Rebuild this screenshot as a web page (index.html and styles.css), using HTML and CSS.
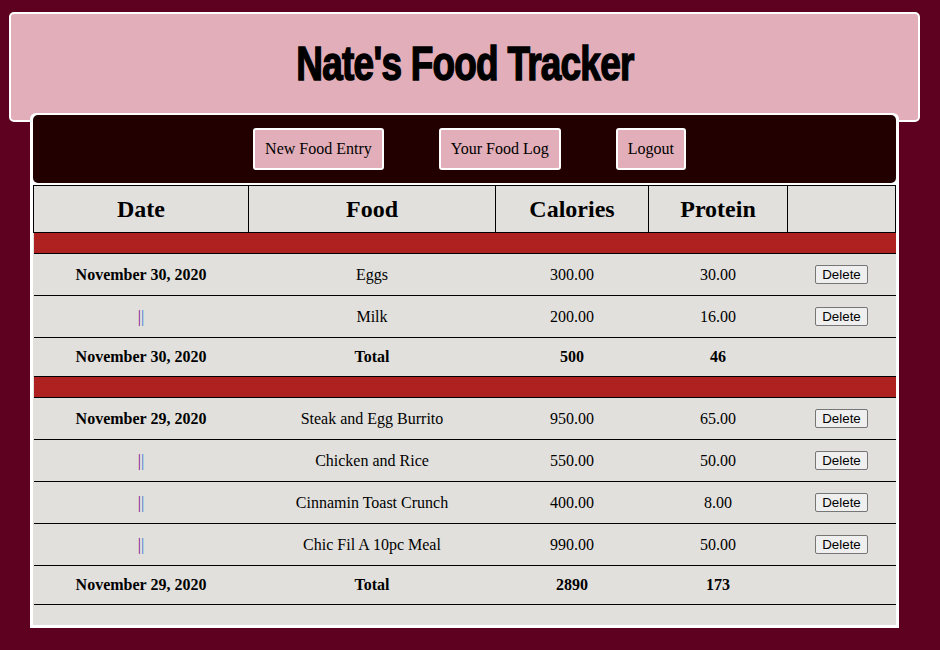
FILE: index.html
```html
<!DOCTYPE html>
<html>
<head>
<meta charset="utf-8">
<link rel="stylesheet" href="styles.css">
</head>
<body>
<header class="header">
  <h1 class="title"><span class="title-text">Nate's Food Tracker</span></h1>
</header>
<main class="panel">
  <nav class="nav">
    <a class="nav-btn" href="#">New Food Entry</a>
    <a class="nav-btn" href="#">Your Food Log</a>
    <a class="nav-btn" href="#">Logout</a>
  </nav>
  <table class="log">
    <colgroup>
      <col class="c1"><col class="c2"><col class="c3"><col class="c4"><col class="c5">
    </colgroup>
    <thead>
      <tr><th>Date</th><th>Food</th><th>Calories</th><th>Protein</th><th></th></tr>
    </thead>
    <tbody>
      <tr class="sep"><td colspan="5"></td></tr>
      <tr class="row"><td class="b">November 30, 2020</td><td>Eggs</td><td>300.00</td><td>30.00</td><td><button class="del">Delete</button></td></tr>
      <tr class="row"><td><span class="p">|</span><span class="bl">|</span></td><td>Milk</td><td>200.00</td><td>16.00</td><td><button class="del">Delete</button></td></tr>
      <tr class="total"><td>November 30, 2020</td><td>Total</td><td>500</td><td>46</td><td></td></tr>
      <tr class="sep"><td colspan="5"></td></tr>
      <tr class="row"><td class="b">November 29, 2020</td><td>Steak and Egg Burrito</td><td>950.00</td><td>65.00</td><td><button class="del">Delete</button></td></tr>
      <tr class="row"><td><span class="p">|</span><span class="bl">|</span></td><td>Chicken and Rice</td><td>550.00</td><td>50.00</td><td><button class="del">Delete</button></td></tr>
      <tr class="row"><td><span class="p">|</span><span class="bl">|</span></td><td>Cinnamin Toast Crunch</td><td>400.00</td><td>8.00</td><td><button class="del">Delete</button></td></tr>
      <tr class="row"><td><span class="p">|</span><span class="bl">|</span></td><td>Chic Fil A 10pc Meal</td><td>990.00</td><td>50.00</td><td><button class="del">Delete</button></td></tr>
      <tr class="total"><td>November 29, 2020</td><td>Total</td><td>2890</td><td>173</td><td></td></tr>
      <tr class="end"><td colspan="5"></td></tr>
    </tbody>
  </table>
</main>
</body>
</html>
```
FILE: styles.css
```css
html, body {
  margin: 0;
  padding: 0;
}
body {
  background: #5e0020;
  font-family: "Liberation Serif", "Times New Roman", serif;
  color: #000;
  padding-top: 12px;
  height: 638px;
  overflow: hidden;
}
.header {
  box-sizing: border-box;
  margin-left: 9px;
  width: 911px;
  height: 110px;
  background: #e2aeb9;
  border: 2px solid #fff;
  border-radius: 5px;
  display: flex;
  justify-content: center;
  align-items: center;
}
.title {
  margin: 0;
  padding-bottom: 6px;
  font-family: "Liberation Sans", Arial, sans-serif;
  font-weight: 700;
  font-size: 48px;
  line-height: 1;
  letter-spacing: -1px;
}
.title-text {
  display: inline-block;
  transform: scaleX(0.77);
  -webkit-text-stroke: 1.5px #000;
}
.panel {
  position: relative;
  box-sizing: border-box;
  margin-left: 30px;
  margin-top: -9px;
  width: 869px;
  background: #fff;
  border-radius: 6px 6px 0 0;
  padding: 2px 3px 3px 3px;
}
.nav {
  height: 68px;
  background: #230000;
  border-radius: 5px;
  display: flex;
  justify-content: center;
  align-items: center;
  gap: 55px;
  padding-left: 10px;
}
.nav-btn {
  box-sizing: border-box;
  height: 42px;
  display: flex;
  align-items: center;
  padding: 0 10px;
  background: #e2aeb9;
  border: 2px solid #fff;
  border-radius: 3px;
  color: #000;
  text-decoration: none;
  font-size: 16px;
}
.log {
  width: 862px;
  margin-top: 2px;
  table-layout: fixed;
  border-collapse: collapse;
  background: #e2e0dd;
  text-align: center;
  font-size: 16px;
}
.c1 { width: 215px; }
.c2 { width: 247px; }
.c3 { width: 153px; }
.c4 { width: 139px; }
.c5 { width: 108px; }
.log th {
  height: 46px;
  border: 1px solid #000;
  font-size: 24px;
  font-weight: 700;
  padding: 0;
}
.log td {
  padding: 0;
}
.sep td {
  height: 20px;
  background: #af2020;
  border-bottom: 1px solid #000;
}
.row td {
  height: 41px;
  border-bottom: 1px solid #000;
}
.total td {
  height: 38px;
  border-bottom: 1px solid #000;
  font-weight: 700;
}
.end td {
  height: 20px;
}
.b {
  font-weight: 700;
}
.p { color: #800080; }
.bl { color: #2a78d0; }
.del {
  font-family: "Liberation Sans", Arial, sans-serif;
  font-size: 13.333px;
  padding: 1px 6px;
  background: #efefef;
  border: 1px solid #767676;
  border-radius: 2px;
  color: #000;
}
```
